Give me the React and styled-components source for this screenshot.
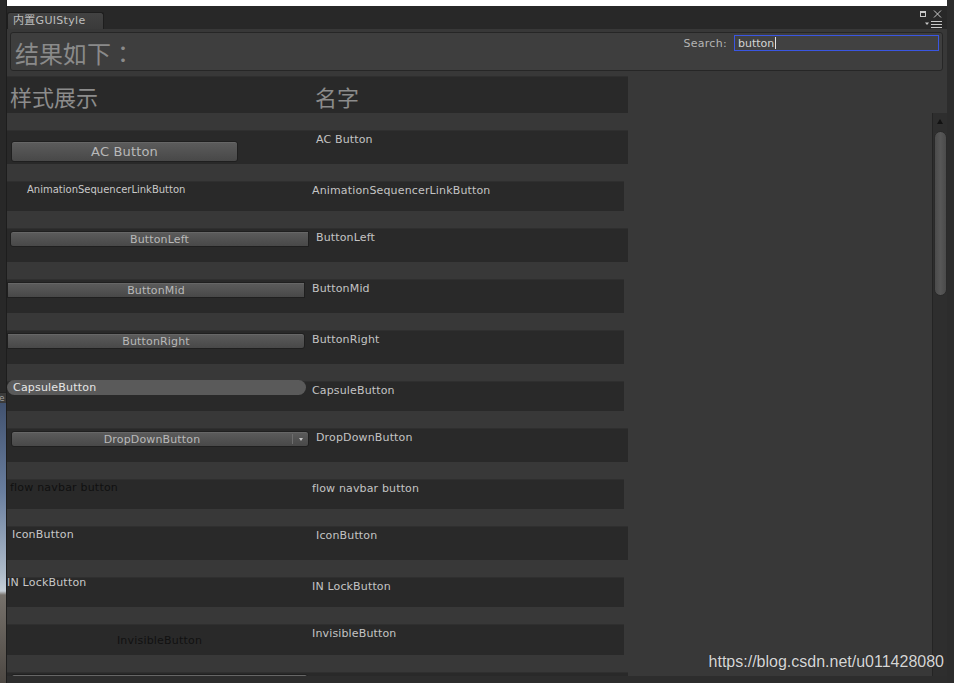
import React from 'react';
import styled, { createGlobalStyle } from 'styled-components';

const GlobalStyle = createGlobalStyle`
  html, body {
    margin: 0;
    padding: 0;
    background: #2b2b2b;
    overflow: hidden;
  }
  body {
    font-family: "DejaVu Sans", "Noto Sans CJK SC", sans-serif;
  }
`;

const Screen = styled.div`
  position: relative;
  display: grid;
  grid-template-columns: 7px 940px 7px;
  width: 954px;
  height: 683px;
  overflow: hidden;
`;

/* sliver of the editor behind the floating window */
const LeftEdge = styled.div`
  display: flex;
  flex-direction: column;
  border-right: 1px solid #1d1d1d;
  box-sizing: border-box;
`;

const LeftDark = styled.div`
  height: 392px;
  background: #282828;
`;

const LeftTab = styled.div`
  height: 11px;
  background: #3a3a3a;
  border-top: 1px solid #222;
  box-sizing: border-box;
  color: #a0a0a0;
  font-size: 9px;
  line-height: 10px;
  overflow: hidden;
  text-indent: -1px;
`;

const Scene = styled.div`
  flex: 1;
  background: linear-gradient(
    to bottom,
    #41526f 0,
    #6a7f9f 90px,
    #aebbc9 170px,
    #c6ced6 188px,
    #76716b 192px,
    #4d4843 100%
  );
`;

const RightEdge = styled.div`
  background: #2c2c2c;
`;

const Window = styled.div`
  display: flex;
  flex-direction: column;
`;

const TopWhite = styled.div`
  height: 6px;
  background: #ffffff;
`;

const TabBar = styled.div`
  height: 23px;
  background: #282828;
  display: flex;
  justify-content: space-between;
  align-items: flex-end;
`;

const Tab = styled.div`
  width: 97px;
  height: 17px;
  box-sizing: border-box;
  padding-left: 5px;
  background: linear-gradient(#424242, #3a3a3a);
  border: 1px solid #1e1e1e;
  border-bottom: none;
  border-radius: 3px 3px 0 0;
  color: #bdbdbd;
  font-size: 11px;
  line-height: 16px;
  letter-spacing: 0.3px;
  white-space: nowrap;
`;

const WindowControls = styled.div`
  align-self: stretch;
  display: flex;
  flex-direction: column;
  align-items: flex-end;
  gap: 3px;
  padding: 4px 5px 0 0;
`;

const Content = styled.div`
  height: 647px;
  background: #383838;
  display: flex;
  flex-direction: column;
`;

const BottomStrip = styled.div`
  flex: 1;
  background: #2d2d2d;
`;

const HeaderBox = styled.div`
  margin: 3px 4px 0 3px;
  height: 39px;
  box-sizing: border-box;
  border: 1px solid #262626;
  border-radius: 3px;
  background: #3e3e3e;
  display: flex;
  justify-content: space-between;
  align-items: flex-start;
`;

const Title = styled.div`
  margin: 8px 0 0 4px;
  font-family: "Noto Sans CJK TC", "Noto Sans CJK SC", sans-serif;
  font-size: 24px;
  line-height: 24px;
  color: #8a8a8a;
`;

const SearchGroup = styled.div`
  display: flex;
  align-items: center;
  gap: 7px;
  margin: 2px 3px 0 0;
`;

const SearchLabel = styled.span`
  font-size: 11px;
  color: #b4b4b4;
  letter-spacing: 0.3px;
`;

const SearchField = styled.div`
  width: 205px;
  height: 16px;
  box-sizing: border-box;
  border: 1px solid #3a56e2;
  background: #414141;
  color: #d4d4d4;
  font-size: 11px;
  padding-left: 3px;
  display: flex;
  align-items: center;
`;

const Caret = styled.span`
  width: 1px;
  height: 12px;
  margin-left: 1px;
  background: #e2e2e2;
`;

const TableHeader = styled.div`
  margin-top: 5px;
  width: 621px;
  height: 37px;
  box-sizing: border-box;
  background: #292929;
  border-top: 1px solid #2f2f2f;
  display: grid;
  grid-template-columns: 305px 1fr;
`;

const HeadCell = styled.div`
  padding: 8px 0 0 3px;
  font-family: "Noto Sans CJK SC", sans-serif;
  font-size: 22px;
  line-height: 22px;
  color: #8c8c8c;
`;

const ScrollArea = styled.div`
  flex: 1;
  min-height: 0;
  display: flex;
`;

const List = styled.div`
  flex: 1;
  overflow: hidden;
  display: flex;
  flex-direction: column;
  gap: 17px;
  padding-top: 17px;
`;

const Scrollbar = styled.div`
  width: 15px;
  box-sizing: border-box;
  background: #2e2e2e;
  border-left: 1px solid #242424;
  display: flex;
  flex-direction: column;
  align-items: center;
  padding-top: 6px;
`;

const ScrollArrow = styled.div`
  width: 0;
  height: 0;
  border-left: 3.5px solid transparent;
  border-right: 3.5px solid transparent;
  border-bottom: 5px solid #121212;
`;

const Thumb = styled.div`
  margin-top: 7px;
  width: 13px;
  height: 165px;
  box-sizing: border-box;
  border: 1px solid #2a2a2a;
  border-radius: 7px;
  background: linear-gradient(90deg, #4b4b4b, #575757 50%, #4b4b4b);
`;

const Row = styled.div`
  flex-shrink: 0;
  width: ${(p) => (p.$wide ? 621 : 617)}px;
  height: ${(p) => p.$h}px;
  box-sizing: border-box;
  background: #292929;
  border-top: 1px solid #2f2f2f;
  display: grid;
  grid-template-columns: ${(p) => (p.$wide ? 309 : 305)}px 1fr;
  align-items: start;
`;

const Label = styled.div`
  padding-top: 2px;
  font-size: 11px;
  line-height: 13px;
  letter-spacing: 0.15px;
  color: #c4c4c4;
  white-space: nowrap;
`;

const CellText = styled.div`
  margin-top: ${(p) => p.$mt ?? 0}px;
  padding-left: ${(p) => p.$pl ?? 0}px;
  font-size: ${(p) => p.$size ?? 11}px;
  line-height: ${(p) => (p.$size ?? 11) + 2}px;
  letter-spacing: ${(p) => p.$spacing ?? 0.2}px;
  color: ${(p) => p.$color ?? '#c8c8c8'};
  text-align: ${(p) => (p.$center ? 'center' : 'left')};
  white-space: nowrap;
`;

const GuiButton = styled.div`
  width: ${(p) => p.$w}px;
  height: ${(p) => p.$h ?? 16}px;
  margin-top: ${(p) => p.$mt ?? 2}px;
  margin-left: ${(p) => p.$ml ?? 0}px;
  box-sizing: border-box;
  display: flex;
  align-items: center;
  justify-content: center;
  border: 1px solid #1f1f1f;
  border-radius: ${(p) => p.$radius ?? '3px'};
  background: linear-gradient(#5c5c5c, #484848);
  box-shadow: inset 0 1px 0 rgba(255, 255, 255, 0.07);
  color: #b9b9b9;
  font-size: ${(p) => p.$size ?? 11}px;
  letter-spacing: 0.15px;
  white-space: nowrap;
`;

const CapsuleButton = styled.div`
  width: 299px;
  height: 15px;
  margin-top: -2px;
  box-sizing: border-box;
  padding-left: 6px;
  display: flex;
  align-items: center;
  border-radius: 8px;
  background: #5a5a5a;
  color: #e6e6e6;
  font-size: 11px;
  letter-spacing: 0.2px;
`;

const DropButton = styled(GuiButton)`
  display: grid;
  grid-template-columns: 1fr 16px;
  align-items: center;
`;

const DropText = styled.span`
  text-align: center;
`;

const DropArrow = styled.span`
  height: 10px;
  border-left: 1px solid #6e6e6e;
  display: flex;
  align-items: center;
  justify-content: center;

  &::after {
    content: '';
    width: 0;
    height: 0;
    border-left: 2.5px solid transparent;
    border-right: 2.5px solid transparent;
    border-top: 3px solid #c4c4c4;
  }
`;

const Watermark = styled.div`
  position: absolute;
  right: 10px;
  top: 653px;
  font-family: "Liberation Sans", Arial, sans-serif;
  font-size: 16px;
  color: #d6d6d6;
  text-shadow: 0 0 1px #222;
`;

const rows = [
  {
    h: 34,
    wide: true,
    label: 'AC Button',
    left: (
      <GuiButton $w={227} $h={21} $mt={10} $ml={4} $size={13}>
        AC Button
      </GuiButton>
    ),
  },
  {
    h: 30,
    label: 'AnimationSequencerLinkButton',
    left: (
      <CellText $size={10} $pl={20} $mt={2} $spacing={0}>
        AnimationSequencerLinkButton
      </CellText>
    ),
  },
  {
    h: 34,
    wide: true,
    label: 'ButtonLeft',
    left: (
      <GuiButton $w={299} $ml={3} $radius="3px 0 0 3px">
        ButtonLeft
      </GuiButton>
    ),
  },
  {
    h: 34,
    label: 'ButtonMid',
    left: (
      <GuiButton $w={298} $radius="0">
        ButtonMid
      </GuiButton>
    ),
  },
  {
    h: 34,
    label: 'ButtonRight',
    left: (
      <GuiButton $w={298} $radius="0 3px 3px 0">
        ButtonRight
      </GuiButton>
    ),
  },
  {
    h: 30,
    label: 'CapsuleButton',
    left: <CapsuleButton>CapsuleButton</CapsuleButton>,
  },
  {
    h: 34,
    wide: true,
    label: 'DropDownButton',
    left: (
      <DropButton $w={298} $ml={4}>
        <DropText>DropDownButton</DropText>
        <DropArrow />
      </DropButton>
    ),
  },
  {
    h: 30,
    label: 'flow navbar button',
    left: (
      <CellText $pl={3} $mt={1} $color="#101010">
        flow navbar button
      </CellText>
    ),
  },
  {
    h: 34,
    wide: true,
    label: 'IconButton',
    left: (
      <CellText $pl={5} $mt={1}>
        IconButton
      </CellText>
    ),
  },
  {
    h: 30,
    label: 'IN LockButton',
    left: <CellText $mt={-2}>IN LockButton</CellText>,
  },
  {
    h: 31,
    label: 'InvisibleButton',
    left: (
      <CellText $center $mt={9} $color="#111111">
        InvisibleButton
      </CellText>
    ),
  },
  {
    h: 34,
    wide: true,
    label: '',
    left: <GuiButton $w={297} $ml={4} $mt={1} />,
  },
];

const CloseIcons = () => (
  <svg width="22" height="8" viewBox="0 0 22 8">
    <rect x="0.5" y="1.5" width="5" height="5" fill="none" stroke="#c8c8c8" />
    <line x1="0.5" y1="2" x2="5.5" y2="2" stroke="#c8c8c8" strokeWidth="2" />
    <path d="M14 0.5 L21 7.5 M21 0.5 L14 7.5" stroke="#c8c8c8" strokeWidth="1" />
  </svg>
);

const MenuIcon = () => (
  <svg width="17" height="7" viewBox="0 0 17 7">
    <path d="M0 1.5 H4 L2 4 Z" fill="#c8c8c8" />
    <path d="M6 0.5 H17 M6 3.5 H17 M6 6.5 H17" stroke="#c8c8c8" strokeWidth="1" />
  </svg>
);

export default function App() {
  return (
    <>
      <GlobalStyle />
      <Screen>
        <LeftEdge>
          <LeftDark />
          <LeftTab>e</LeftTab>
          <Scene />
        </LeftEdge>

        <Window>
          <TopWhite />
          <TabBar>
            <Tab>内置GUIStyle</Tab>
            <WindowControls>
              <CloseIcons />
              <MenuIcon />
            </WindowControls>
          </TabBar>

          <Content>
            <HeaderBox>
              <Title>结果如下：</Title>
              <SearchGroup>
                <SearchLabel>Search:</SearchLabel>
                <SearchField>
                  button
                  <Caret />
                </SearchField>
              </SearchGroup>
            </HeaderBox>

            <TableHeader>
              <HeadCell>样式展示</HeadCell>
              <HeadCell>名字</HeadCell>
            </TableHeader>

            <ScrollArea>
              <List>
                {rows.map((r, i) => (
                  <Row key={i} $h={r.h} $wide={r.wide}>
                    {r.left}
                    <Label>{r.label}</Label>
                  </Row>
                ))}
              </List>
              <Scrollbar>
                <ScrollArrow />
                <Thumb />
              </Scrollbar>
            </ScrollArea>
          </Content>
          <BottomStrip />
        </Window>

        <RightEdge />
        <Watermark>https://blog.csdn.net/u011428080</Watermark>
      </Screen>
    </>
  );
}
